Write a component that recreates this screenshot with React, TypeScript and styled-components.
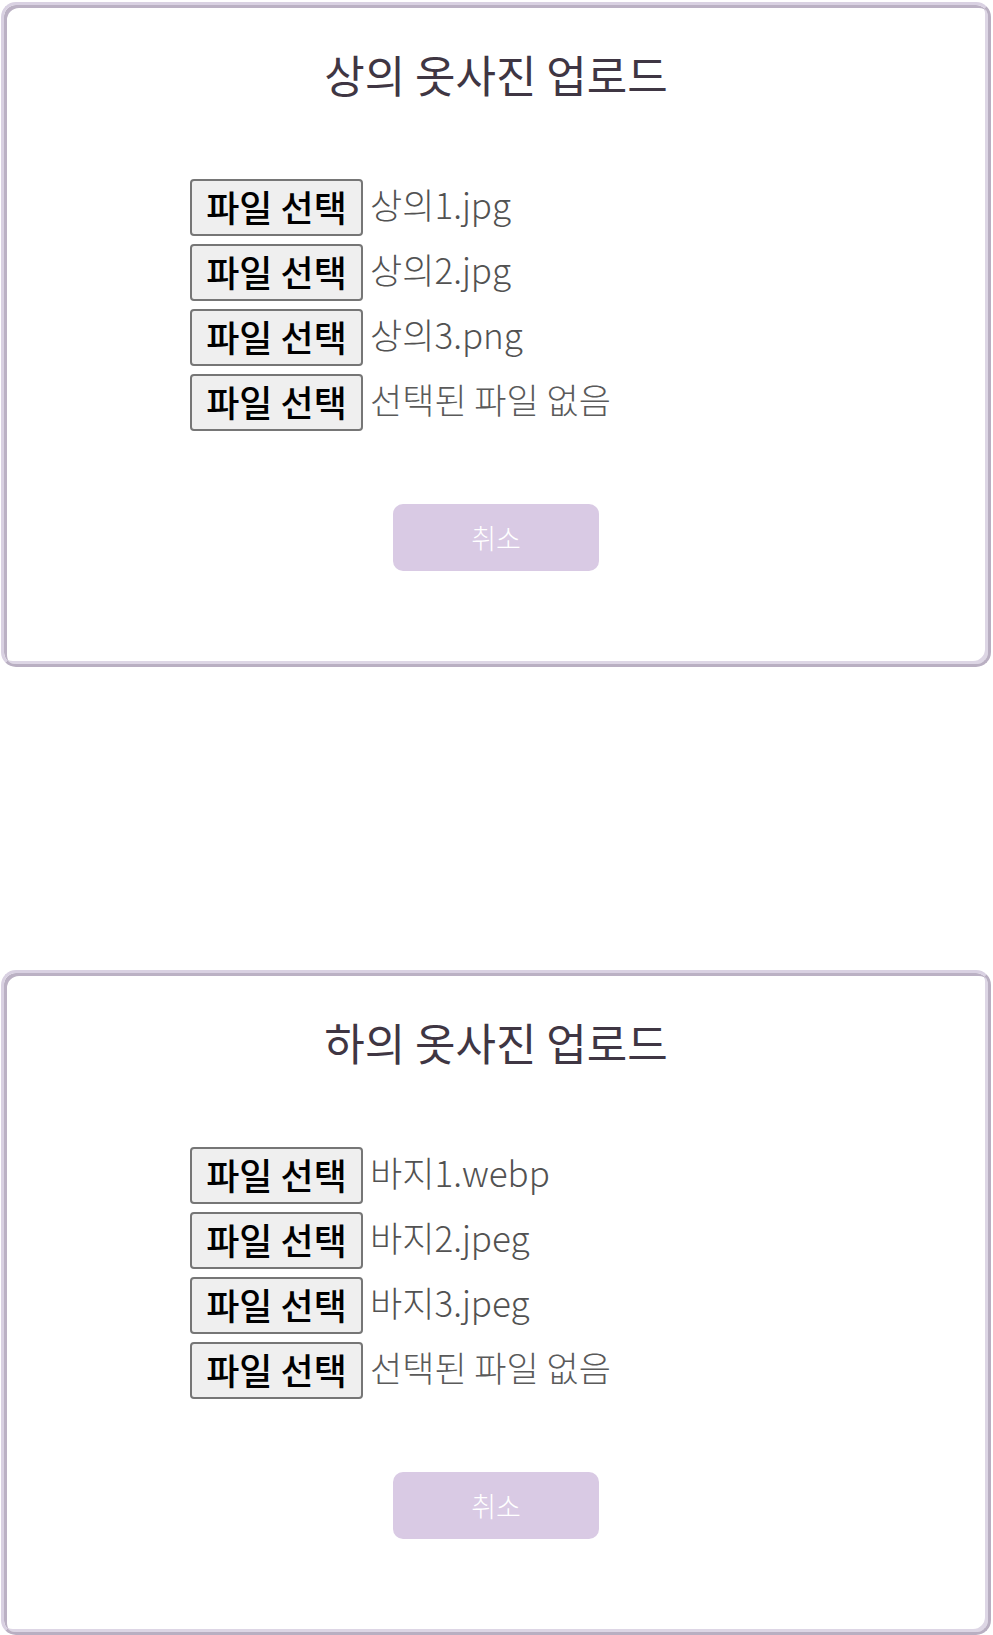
import styled, { createGlobalStyle } from "styled-components";

const GlobalStyle = createGlobalStyle`
  html, body {
    margin: 0;
    padding: 0;
    background: #ffffff;
  }

  body {
    font-family: "Noto Sans CJK KR", "Noto Sans", sans-serif;
  }
`;

const Page = styled.main`
  display: flex;
  flex-direction: column;
  gap: 303px;
  padding: 2px 2px 1px 1px;
`;

const Card = styled.section`
  box-sizing: border-box;
  width: 990px;
  height: 665px;
  padding-top: 43px;

  display: flex;
  flex-direction: column;
  align-items: center;

  background: #ffffff;
  border: 3px solid;
  border-color: #d9d1e2 #b9afc2 #b9afc2 #d9d1e2;
  border-radius: 15px;
  box-shadow:
    inset 3px 3px 0 0 #bbb1c4,
    inset -3px -3px 0 0 #ddd6e5;
`;

const Title = styled.h2`
  margin: 0;
  font-size: 44px;
  line-height: 52px;
  font-weight: 400;
  color: #3f3643;
`;

const FileList = styled.div`
  align-self: flex-start;
  margin: 79px 0 0 186px;

  display: flex;
  flex-direction: column;
  gap: 8px;
`;

const FileRow = styled.div`
  display: flex;
  align-items: center;
  gap: 7px;
`;

const PickButton = styled.button`
  box-sizing: border-box;
  width: 173px;
  height: 57px;
  padding: 0 0 3px;

  display: flex;
  align-items: center;
  justify-content: center;

  background: #efefef;
  border: 2px solid #767676;
  border-radius: 4px;

  font-family: "Noto Sans CJK KR", sans-serif;
  font-size: 36px;
  font-weight: 500;
  color: #000000;
  cursor: pointer;
`;

const FileName = styled.span<{ $empty?: boolean }>`
  padding-bottom: 8px;
  line-height: 44px;
  font-family: "Noto Sans CJK KR", sans-serif;
  font-size: 35px;
  font-weight: 300;
  color: ${(p) => (p.$empty ? "#5a5a5a" : "#525252")};
  white-space: nowrap;
`;

const CancelButton = styled.button`
  box-sizing: border-box;
  width: 206px;
  height: 67px;
  margin-top: 73px;

  background: #d9cae4;
  border: none;
  border-radius: 10px;

  font-family: "Noto Sans CJK KR", sans-serif;
  font-size: 27px;
  font-weight: 300;
  color: #ffffff;
  cursor: pointer;
`;

type UploadProps = {
  title: string;
  files: (string | null)[];
};

const UploadCard = ({ title, files }: UploadProps) => (
  <Card>
    <Title>{title}</Title>

    <FileList>
      {files.map((name, i) => (
        <FileRow key={i}>
          <PickButton type="button">파일 선택</PickButton>
          <FileName $empty={!name}>{name ?? "선택된 파일 없음"}</FileName>
        </FileRow>
      ))}
    </FileList>

    <CancelButton type="button">취소</CancelButton>
  </Card>
);

const App = () => (
  <>
    <GlobalStyle />
    <Page>
      <UploadCard
        title="상의 옷사진 업로드"
        files={["상의1.jpg", "상의2.jpg", "상의3.png", null]}
      />
      <UploadCard
        title="하의 옷사진 업로드"
        files={["바지1.webp", "바지2.jpeg", "바지3.jpeg", null]}
      />
    </Page>
  </>
);

export default App;
